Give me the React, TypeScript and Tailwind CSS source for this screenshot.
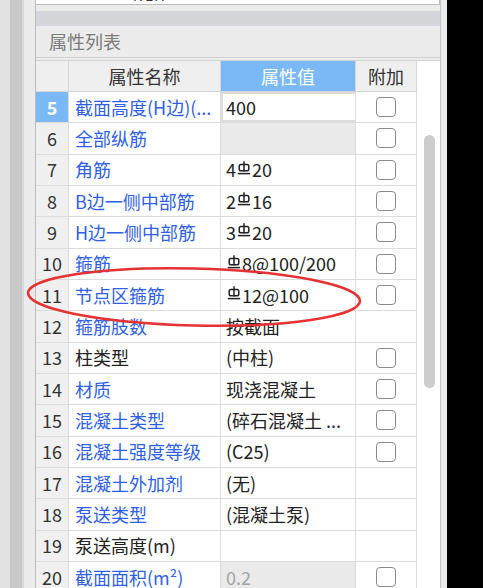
import React from 'react';

type Row = {
  no: number;
  name: string;
  value?: React.ReactNode;
  blue: boolean;
  check: boolean;
  disabled?: boolean;
  selected?: boolean;
};

// grade III rebar symbol, drawn since no font has it
const Gang: React.FC = () => (
  <svg width="14" height="15" viewBox="0 0 14 15" className="inline-block mx-[1px] -mt-[3px]">
    <g stroke="#222" strokeWidth="1.5" fill="none">
      <line x1="7" y1="0.3" x2="7" y2="10.5" />
      <rect x="2.2" y="3.6" width="9.6" height="6.2" rx="1.8" />
      <line x1="0.8" y1="12.6" x2="13.2" y2="12.6" />
    </g>
  </svg>
);

const rows: Row[] = [
  { no: 5, name: '截面高度(H边)(...', value: '400', blue: true, check: true, selected: true },
  { no: 6, name: '全部纵筋', blue: true, check: true, disabled: true },
  { no: 7, name: '角筋', value: <>4<Gang />20</>, blue: true, check: true },
  { no: 8, name: 'B边一侧中部筋', value: <>2<Gang />16</>, blue: true, check: true },
  { no: 9, name: 'H边一侧中部筋', value: <>3<Gang />20</>, blue: true, check: true },
  { no: 10, name: '箍筋', value: <><Gang />8@100/200</>, blue: true, check: true },
  { no: 11, name: '节点区箍筋', value: <><Gang />12@100</>, blue: true, check: true },
  { no: 12, name: '箍筋肢数', value: '按截面', blue: true, check: false },
  { no: 13, name: '柱类型', value: '(中柱)', blue: false, check: true },
  { no: 14, name: '材质', value: '现浇混凝土', blue: true, check: true },
  { no: 15, name: '混凝土类型', value: '(碎石混凝土 ...', blue: true, check: true },
  { no: 16, name: '混凝土强度等级', value: '(C25)', blue: true, check: true },
  { no: 17, name: '混凝土外加剂', value: '(无)', blue: true, check: false },
  { no: 18, name: '泵送类型', value: '(混凝土泵)', blue: true, check: false },
  { no: 19, name: '泵送高度(m)', blue: false, check: false },
  { no: 20, name: '截面面积(m²)', value: '0.2', blue: true, check: true, disabled: true },
];

const CheckBox: React.FC = () => (
  <div className="w-[20px] h-[20px] rounded-[4px] border-[1.5px] border-[#8b8b8b] bg-white" />
);

const App: React.FC = () => {
  return (
    <div className="relative w-[483px] h-[588px] flex overflow-hidden bg-black text-[18px] font-[family-name:'Noto_Sans_CJK_SC',sans-serif]">
      <div className="w-[10px] shrink-0 bg-[#e2e2e2]" />
      <div className="w-[12px] shrink-0 bg-[#c9c9c9]" />
      <div className="w-[14px] shrink-0 bg-[#ebebeb] border-l-[2px] border-l-[#d9d9d9] border-r border-r-[#bdbdbd]" />

      <div className="w-[405px] shrink-0 flex flex-col bg-[#ececec] border-r border-[#c3c3c3]">
        <div className="h-[5px] shrink-0 bg-white border-b border-r border-[#bcbcbc] overflow-hidden pl-[97px]">
          <div className="-mt-[13px] text-[14px] leading-[16px] text-[#333] tracking-[2px]">NEA</div>
        </div>
        <div className="h-[6px] shrink-0" />
        <div className="h-[15px] shrink-0 bg-[#d5d6da]" />
        <div className="h-[32px] shrink-0 flex items-center pl-[13px] text-[#7a7a7a] border-b border-[#cfcfcf]">属性列表</div>
        <div className="h-[2px] shrink-0" />

        <div className="flex flex-1 min-h-0 overflow-hidden border-t border-[#d2d2d2]">
          <div className="w-[381px] flex flex-col">
            <div className="flex h-[31px] shrink-0 border-b border-[#d6d6d6]">
              <div className="w-[33px] bg-[#efefef] border-r border-[#d6d6d6]" />
              <div className="w-[152px] bg-[#efefef] border-r border-[#d6d6d6] flex items-center justify-center text-[#333]">属性名称</div>
              <div className="w-[135px] bg-[#7ab8f6] border-r border-[#d6d6d6] flex items-center justify-center text-white">属性值</div>
              <div className="w-[61px] bg-[#efefef] border-r border-[#d6d6d6] flex items-center justify-center text-[#333]">附加</div>
            </div>
            {rows.map((r) => (
              <div key={r.no} className="flex h-[31.33px] shrink-0 border-b border-[#dcdcdc]">
                <div
                  className={`w-[33px] border-r border-[#dcdcdc] flex items-center justify-center ${
                    r.selected ? 'bg-[#7ab8f6] text-white font-bold' : 'bg-[#f0f0f0] text-[#333]'
                  }`}
                >
                  {r.no}
                </div>
                <div
                  className={`w-[152px] bg-white border-r border-[#dcdcdc] flex items-center pl-[6px] whitespace-nowrap overflow-hidden ${
                    r.blue ? 'text-[#2f5fe6]' : 'text-[#222]'
                  }`}
                >
                  {r.name}
                </div>
                <div
                  className={`w-[135px] border-r border-[#dcdcdc] flex items-center whitespace-nowrap overflow-hidden ${
                    r.selected
                      ? 'bg-white border-[2px] border-[#7d7d7d] pl-[3px] text-[#222]'
                      : r.disabled
                      ? 'bg-[#eaeaea] pl-[5px] text-[#a3a3a3]'
                      : 'bg-white pl-[5px] text-[#222]'
                  }`}
                >
                  {r.value}
                </div>
                <div className="w-[61px] bg-white border-r border-[#dcdcdc] flex items-center justify-center">
                  {r.check && <CheckBox />}
                </div>
              </div>
            ))}
          </div>
          <div className="w-[23px] bg-white flex flex-col pt-[74px] pl-[7px]">
            <div className="w-[11px] h-[253px] shrink-0 rounded-full bg-[#cdcdcd]" />
          </div>
        </div>
      </div>

      <div className="w-[6px] shrink-0 bg-[#ececec]" />
      <div className="flex-1 bg-black" />

      <svg className="absolute left-0 top-0 pointer-events-none" width="483" height="588">
        <ellipse
          cx="194"
          cy="297"
          rx="166"
          ry="28.5"
          transform="rotate(1.4 194 297)"
          fill="none"
          stroke="#e63232"
          strokeWidth="2.6"
        />
      </svg>
    </div>
  );
};

export default App;
